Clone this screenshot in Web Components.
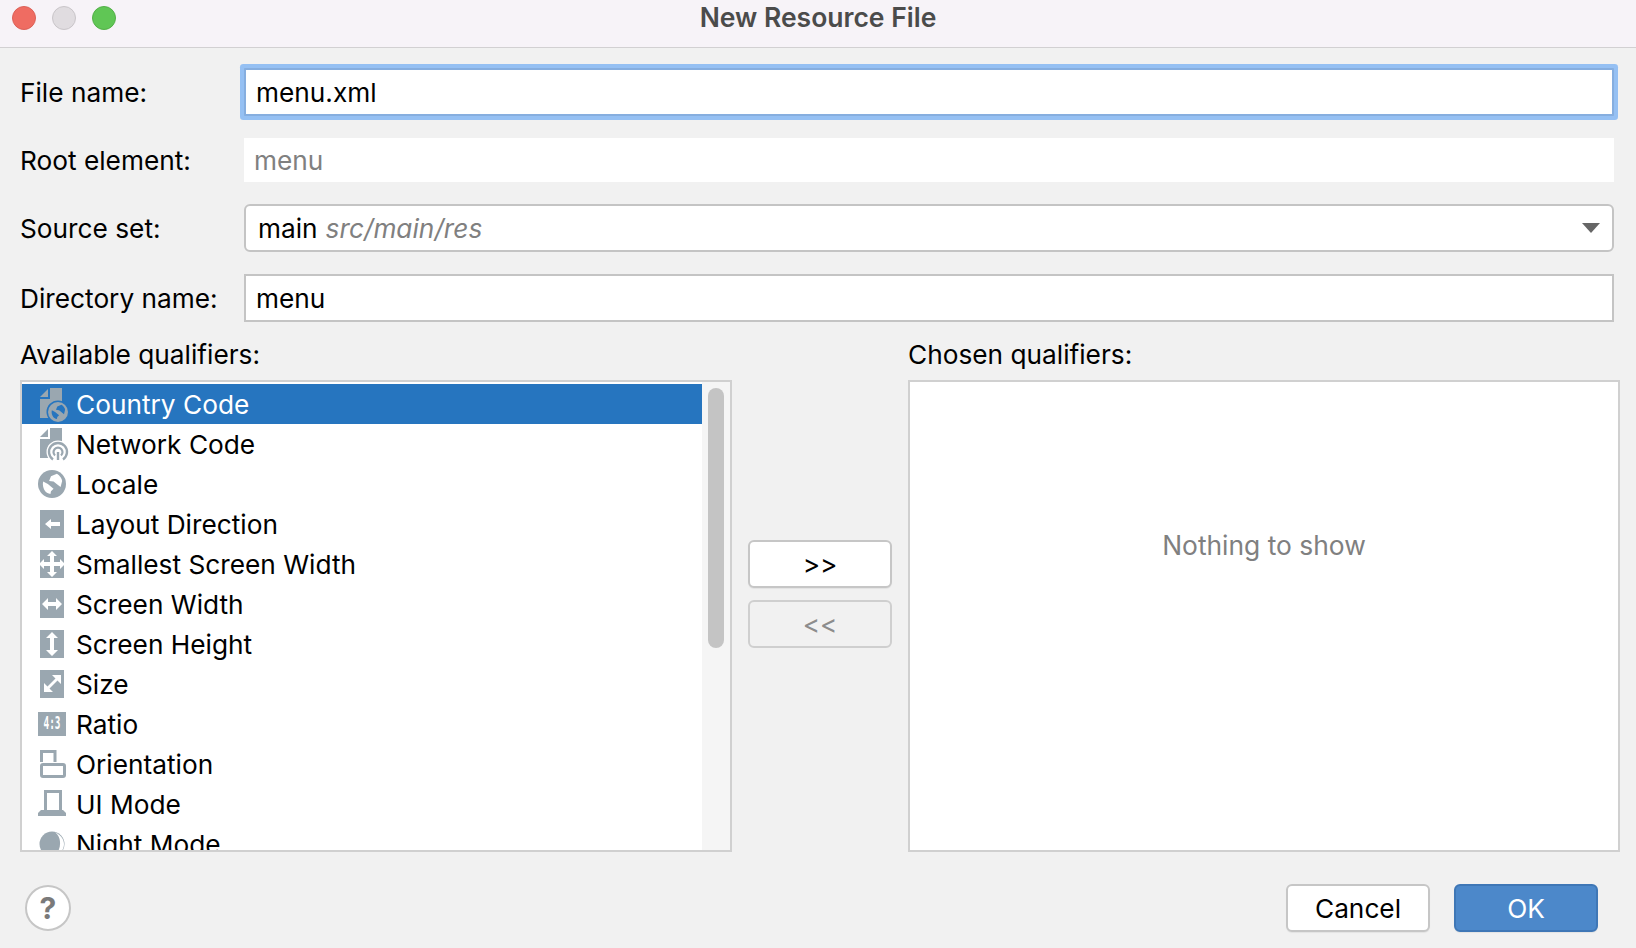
<!DOCTYPE html>
<html>
<head>
<meta charset="utf-8">
<title>New Resource File</title>
<style>
  html, body { margin: 0; padding: 0; background: #f1f1f1; }
  body { font-family: Inter, "Liberation Sans", sans-serif; }
</style>
</head>
<body>
<resource-dialog>
  <mac-titlebar>New Resource File</mac-titlebar>

  <form-row slot="form" label="File name:"><text-field focused>menu.xml</text-field></form-row>
  <form-row slot="form" label="Root element:" short><text-field plain>menu</text-field></form-row>
  <form-row slot="form" label="Source set:"><combo-field hint="src/main/res">main</combo-field></form-row>
  <form-row slot="form" label="Directory name:"><text-field>menu</text-field></form-row>

  <qualifier-list slot="available">
    <qualifier-item icon="country" selected>Country Code</qualifier-item>
    <qualifier-item icon="network">Network Code</qualifier-item>
    <qualifier-item icon="locale">Locale</qualifier-item>
    <qualifier-item icon="direction">Layout Direction</qualifier-item>
    <qualifier-item icon="smallest">Smallest Screen Width</qualifier-item>
    <qualifier-item icon="width">Screen Width</qualifier-item>
    <qualifier-item icon="height">Screen Height</qualifier-item>
    <qualifier-item icon="size">Size</qualifier-item>
    <qualifier-item icon="ratio">Ratio</qualifier-item>
    <qualifier-item icon="orientation">Orientation</qualifier-item>
    <qualifier-item icon="uimode">UI Mode</qualifier-item>
    <qualifier-item icon="night">Night Mode</qualifier-item>
  </qualifier-list>

  <dialog-button slot="move">&gt;&gt;</dialog-button>
  <dialog-button slot="move" disabled>&lt;&lt;</dialog-button>

  <empty-list slot="chosen">Nothing to show</empty-list>

  <help-button slot="help"></help-button>
  <dialog-button slot="actions">Cancel</dialog-button>
  <dialog-button slot="actions" primary>OK</dialog-button>
</resource-dialog>

<script>
const ICON_GRAY = '#9aa7b0';

// land patches of the globe, drawn on a disc at 14,16 with radius 14
const GLOBE_LAND = 'M10.300 12L12.700 6L20.300 2.700C24 5 27 9 27 12L25 20L20 16L16 12.700ZM2.700 12.700L8.700 16L16 22L12.700 25.300L12 28.700C9 28.500 7 27 5.300 25.300C3 22 1.500 17 2.700 12.700Z';

const DOC = `
    <path d="M2 9L10 1V9Z" fill="${ICON_GRAY}"/>
    <path d="M12 0H24V30H2V11H12Z" fill="${ICON_GRAY}"/>
    <circle cx="20" cy="24" r="11.500" fill="var(--halo)"/>`;

const ICONS = {
  country: `${DOC}
    <circle cx="20" cy="24" r="10" fill="${ICON_GRAY}"/>
    <path d="${GLOBE_LAND}" fill="var(--halo)" transform="translate(12.360 15.260) scale(.546)"/>`,
  network: `${DOC}
    <path d="M15 31.500A9 9 0 1 1 25 31.500" fill="none" stroke="${ICON_GRAY}" stroke-width="2.400"/>
    <path d="M17 27.500A4.500 4.500 0 1 1 23 27.500" fill="none" stroke="${ICON_GRAY}" stroke-width="2.200"/>
    <path d="M18.800 24H21.200V32H18.800Z" fill="${ICON_GRAY}"/>`,
  locale: `
    <circle cx="14" cy="16" r="14" fill="${ICON_GRAY}"/>
    <path d="${GLOBE_LAND}" fill="#fff" transform="translate(3.080 3.520) scale(.78)"/>`,
  direction: `
    <rect x="2" y="2" width="24" height="28" fill="${ICON_GRAY}"/>
    <path d="M7 16L13 11V14H22V18H13V21Z" fill="#fff"/>`,
  smallest: `
    <rect x="2" y="2" width="24" height="28" fill="${ICON_GRAY}"/>
    <path d="M14 3L19 8H16V14H22V11L27 16L22 21V18H16V24H19L14 29L9 24H12V18H6V21L1 16L6 11V14H12V8H9Z" fill="#fff"/>`,
  width: `
    <rect x="2" y="2" width="24" height="28" fill="${ICON_GRAY}"/>
    <path d="M4 16L10 10V14H18V10L24 16L18 22V18H10V22Z" fill="#fff"/>`,
  height: `
    <rect x="2" y="2" width="24" height="28" fill="${ICON_GRAY}"/>
    <path d="M14 4L20 10H16V22H20L14 28L8 22H12V10H8Z" fill="#fff"/>`,
  size: `
    <rect x="2" y="2" width="24" height="28" fill="${ICON_GRAY}"/>
    <path d="M23 7V16L19.500 12.500L11.500 20.500L15 24H6V15L9.500 18.500L17.500 10.500L14 7Z" fill="#fff"/>`,
  ratio: `
    <rect x="0" y="4" width="28" height="24" fill="${ICON_GRAY}"/>
    <text x="5.500" y="21" textLength="17" lengthAdjust="spacingAndGlyphs" font-family="'DejaVu Sans Mono', monospace" font-weight="700" font-size="18" fill="#fff">4:3</text>`,
  orientation: `
    <path d="M3.500 14V3.500H17V14" fill="none" stroke="${ICON_GRAY}" stroke-width="3"/>
    <rect x="3.500" y="16.500" width="23" height="12" rx="1.500" fill="none" stroke="${ICON_GRAY}" stroke-width="3"/>`,
  uimode: `
    <path d="M7.500 23V3.500H22.500V23" fill="none" stroke="${ICON_GRAY}" stroke-width="3"/>
    <path d="M3 22H25L28 25V28H0V25Z" fill="${ICON_GRAY}"/>`,
  night: `
    <circle cx="14" cy="16" r="12.500" fill="${ICON_GRAY}"/>
    <path d="M17 4.500C23 8 24.500 20 17 27.500C23 26 26 21 26 16C26 11 22.500 6.500 17 4.500Z" fill="#fff"/>`
};

class MacTitlebar extends HTMLElement {
  constructor() {
    super();
    this.attachShadow({ mode: 'open' });
    this.shadowRoot.innerHTML = `
      <style>
        :host {
          display: grid;
          grid-template-columns: 1fr auto 1fr;
          align-items: start;
          height: 47px;
          background: #f7f3f8;
          border-bottom: 1px solid #d2d0d2;
        }
        .lights { display: flex; gap: 16px; padding: 6px 0 0 12px; }
        .light { width: 24px; height: 24px; border-radius: 50%; box-sizing: border-box; border: 1px solid; }
        .red { background: #ef6c62; border-color: #dc6158; }
        .gray { background: #e0dce0; border-color: #c9c5c9; }
        .green { background: #60c655; border-color: #53b048; }
        .title { font-size: 26.500px; font-weight: 600; line-height: 32px; padding-top: 1px; color: #4b4b4b; }
      </style>
      <div class="lights"><div class="light red"></div><div class="light gray"></div><div class="light green"></div></div>
      <div class="title"><slot></slot></div>
      <div></div>`;
  }
}

class FormRow extends HTMLElement {
  constructor() {
    super();
    this.attachShadow({ mode: 'open' });
    this.shadowRoot.innerHTML = `
      <style>
        :host {
          display: grid;
          grid-template-columns: 224px 1fr;
          align-items: center;
          height: 48px;
        }
        :host([short]) { height: 44px; }
        .label { font-size: 26.250px; color: #000; }
      </style>
      <div class="label">${this.getAttribute('label')}</div>
      <slot></slot>`;
  }
}

class TextField extends HTMLElement {
  constructor() {
    super();
    this.attachShadow({ mode: 'open' });
    this.shadowRoot.innerHTML = `
      <style>
        :host {
          display: flex;
          align-items: center;
          box-sizing: border-box;
          height: 48px;
          padding: 0 10px;
          background: #fff;
          border: 2px solid #c4c4c4;
          font-size: 26.250px;
          color: #000;
        }
        :host([focused]) {
          border-color: #86aedf;
          box-shadow: 0 0 0 4px #95c0f3;
          border-radius: 1px;
        }
        :host([plain]) {
          height: 44px;
          border: 0;
          color: #808080;
        }
      </style>
      <slot></slot>`;
  }
}

class ComboField extends HTMLElement {
  constructor() {
    super();
    this.attachShadow({ mode: 'open' });
    this.shadowRoot.innerHTML = `
      <style>
        :host {
          display: flex;
          align-items: center;
          box-sizing: border-box;
          height: 48px;
          padding: 0 12px;
          background: #fff;
          border: 2px solid #c4c4c4;
          border-radius: 6px;
          font-size: 26.250px;
          color: #000;
        }
        .hint { font-style: italic; color: #808080; margin-left: 8px; flex: 1; }
        .arrow {
          width: 0; height: 0;
          border-left: 9px solid transparent;
          border-right: 9px solid transparent;
          border-top: 10px solid #666;
        }
      </style>
      <slot></slot>
      <span class="hint">${this.getAttribute('hint')}</span>
      <span class="arrow"></span>`;
  }
}

class QualifierList extends HTMLElement {
  constructor() {
    super();
    this.attachShadow({ mode: 'open' });
    this.shadowRoot.innerHTML = `
      <style>
        :host {
          display: flex;
          box-sizing: border-box;
          height: 472px;
          background: #fff;
          border: 2px solid #d0d0d0;
        }
        .rows {
          flex: 1;
          min-width: 0;
          padding-top: 2px;
          overflow: hidden;
        }
        .track {
          width: 28px;
          box-sizing: border-box;
          padding: 6px;
          background: #f5f5f5;
        }
        .thumb { height: 260px; background: #c4c4c4; border-radius: 8px; }
      </style>
      <div class="rows"><slot></slot></div>
      <div class="track"><div class="thumb"></div></div>`;
  }
}

class QualifierItem extends HTMLElement {
  constructor() {
    super();
    this.attachShadow({ mode: 'open' });
    this.shadowRoot.innerHTML = `
      <style>
        :host {
          --halo: #fff;
          display: flex;
          align-items: center;
          gap: 10px;
          height: 40px;
          padding-left: 16px;
          font-size: 26.250px;
          color: #000;
        }
        :host([selected]) {
          --halo: #2675bf;
          background: #2675bf;
          color: #fff;
        }
        svg { flex: none; width: 28px; height: 32px; overflow: visible; }
      </style>
      <svg viewBox="0 0 28 32">${ICONS[this.getAttribute('icon')]}</svg>
      <slot></slot>`;
  }
}

class DialogButton extends HTMLElement {
  constructor() {
    super();
    this.attachShadow({ mode: 'open' });
    this.shadowRoot.innerHTML = `
      <style>
        :host {
          display: flex;
          align-items: center;
          justify-content: center;
          box-sizing: border-box;
          width: 144px;
          height: 48px;
          background: #fff;
          border: 2px solid #c6c6c6;
          border-radius: 6px;
          box-shadow: 0 1px 1px rgba(0, 0, 0, 0.06);
          font-size: 26.250px;
          color: #000;
        }
        :host([disabled]) {
          background: #f1f1f1;
          border-color: #cfcfcf;
          box-shadow: none;
          color: #8c8c8c;
        }
        :host([primary]) {
          background: #4c88ca;
          border-color: #3f77b6;
          color: #fff;
        }
      </style>
      <slot></slot>`;
  }
}

class EmptyList extends HTMLElement {
  constructor() {
    super();
    this.attachShadow({ mode: 'open' });
    this.shadowRoot.innerHTML = `
      <style>
        :host {
          display: flex;
          justify-content: center;
          box-sizing: border-box;
          height: 472px;
          padding-top: 147px;
          background: #fff;
          border: 2px solid #d0d0d0;
          font-size: 26.400px;
          color: #808080;
        }
      </style>
      <slot></slot>`;
  }
}

class HelpButton extends HTMLElement {
  constructor() {
    super();
    this.attachShadow({ mode: 'open' });
    this.shadowRoot.innerHTML = `
      <style>
        :host {
          display: flex;
          align-items: center;
          justify-content: center;
          box-sizing: border-box;
          width: 46px;
          height: 46px;
          background: #fff;
          border: 2px solid #c6c6c6;
          border-radius: 50%;
          font-size: 30px;
          font-weight: 700;
          color: #7a7a7a;
        }
      </style>
      ?`;
  }
}

class ResourceDialog extends HTMLElement {
  constructor() {
    super();
    this.attachShadow({ mode: 'open' });
    this.shadowRoot.innerHTML = `
      <style>
        :host {
          display: block;
          width: 1636px;
          height: 948px;
          background: #f1f1f1;
          overflow: hidden;
        }
        .form {
          display: flex;
          flex-direction: column;
          gap: 22px;
          padding: 20px 22px 0 20px;
        }
        .lists {
          display: grid;
          grid-template-columns: 712px 144px 712px;
          column-gap: 16px;
          padding: 21px 16px 0 20px;
        }
        .caption { font-size: 26.250px; color: #000; line-height: 24px; margin-bottom: 13px; }
        .caption.right { grid-column: 3; }
        .move {
          display: flex;
          flex-direction: column;
          gap: 12px;
          padding-top: 160px;
        }
        .footer {
          display: flex;
          align-items: center;
          justify-content: space-between;
          padding: 32px 38px 0 25px;
        }
        .actions { display: flex; gap: 24px; }
      </style>
      <slot></slot>
      <div class="form"><slot name="form"></slot></div>
      <div class="lists">
        <div class="caption">Available qualifiers:</div>
        <div class="caption right">Chosen qualifiers:</div>
        <slot name="available"></slot>
        <div class="move"><slot name="move"></slot></div>
        <slot name="chosen"></slot>
      </div>
      <div class="footer">
        <slot name="help"></slot>
        <div class="actions"><slot name="actions"></slot></div>
      </div>`;
  }
}

customElements.define('mac-titlebar', MacTitlebar);
customElements.define('form-row', FormRow);
customElements.define('text-field', TextField);
customElements.define('combo-field', ComboField);
customElements.define('qualifier-list', QualifierList);
customElements.define('qualifier-item', QualifierItem);
customElements.define('dialog-button', DialogButton);
customElements.define('empty-list', EmptyList);
customElements.define('help-button', HelpButton);
customElements.define('resource-dialog', ResourceDialog);
</script>
</body>
</html>
